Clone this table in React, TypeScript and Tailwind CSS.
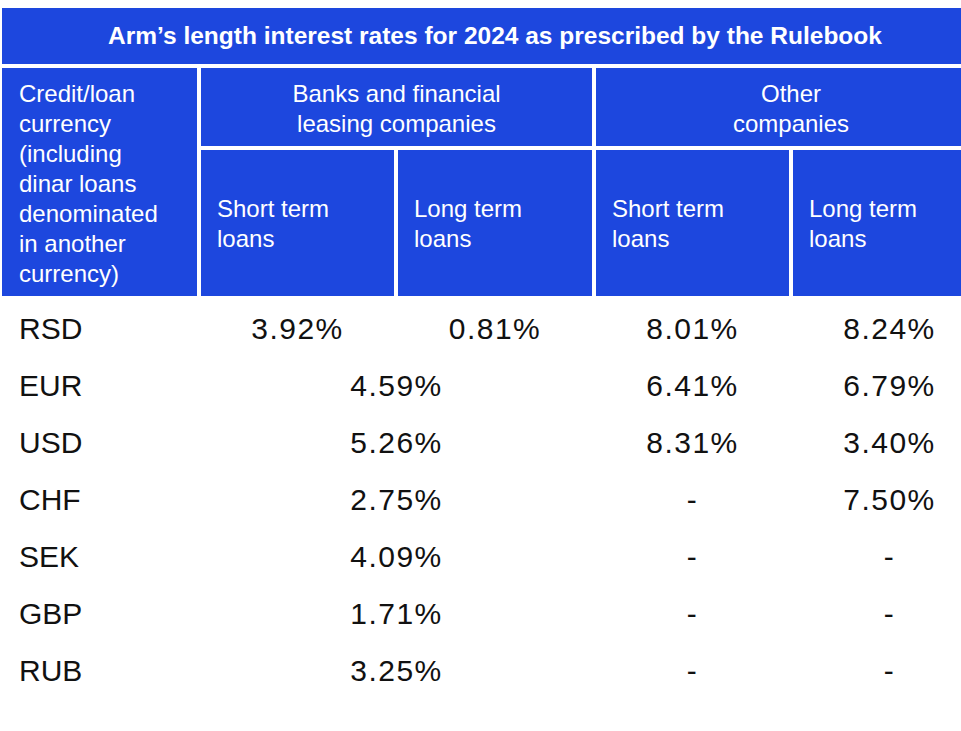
const rows: { code: string; cells: (string | { span: string })[] }[] = [
  { code: "RSD", cells: ["3.92%", "0.81%", "8.01%", "8.24%"] },
  { code: "EUR", cells: [{ span: "4.59%" }, "6.41%", "6.79%"] },
  { code: "USD", cells: [{ span: "5.26%" }, "8.31%", "3.40%"] },
  { code: "CHF", cells: [{ span: "2.75%" }, "-", "7.50%"] },
  { code: "SEK", cells: [{ span: "4.09%" }, "-", "-"] },
  { code: "GBP", cells: [{ span: "1.71%" }, "-", "-"] },
  { code: "RUB", cells: [{ span: "3.25%" }, "-", "-"] },
]

const cols = "grid grid-cols-[195px_193px_194px_193px_193px] gap-x-[4px]"

export default function App() {
  return (
    <div
      className="w-[961px] h-[731px] overflow-hidden bg-white"
      style={{ fontFamily: '"Liberation Sans", Arial, sans-serif' }}
    >
      <div className="w-[986px] ml-[2px] pt-[8px]">
        <div className="h-[56px] bg-[#1d47de] flex items-center justify-center text-white font-bold text-[24.5px]">
          Arm’s length interest rates for 2024 as prescribed by the Rulebook
        </div>

        <div className={`${cols} gap-y-[4px] mt-[4px] grid-rows-[78px_146px] text-white text-[24px] leading-[30px]`}>
          <div className="row-span-2 bg-[#1d47de] pl-[17px] pt-[11px]">
            Credit/loan
            <br />
            currency
            <br />
            (including
            <br />
            dinar loans
            <br />
            denominated
            <br />
            in another
            <br />
            currency)
          </div>
          <div className="col-span-2 bg-[#1d47de] pt-[11px] text-center">
            Banks and financial
            <br />
            leasing companies
          </div>
          <div className="col-span-2 bg-[#1d47de] pt-[11px] text-center">
            Other
            <br />
            companies
          </div>
          {["Short term", "Long term", "Short term", "Long term"].map((t, i) => (
            <div key={i} className="bg-[#1d47de] flex items-center pl-[16px] pt-[2px]">
              <div>
                {t}
                <br />
                loans
              </div>
            </div>
          ))}
        </div>

        <div className="pt-[4px] text-[#111] text-[30px]">
          {rows.map((r) => (
            <div key={r.code} className={`${cols} h-[57px] items-center`}>
              <div className="pl-[17px]">{r.code}</div>
              {r.cells.map((c, i) =>
                typeof c === "string" ? (
                  <div key={i} className="text-center tracking-[1.5px]">
                    {c}
                  </div>
                ) : (
                  <div key={i} className="col-span-2 text-center tracking-[1.5px]">
                    {c.span}
                  </div>
                )
              )}
            </div>
          ))}
        </div>
      </div>
    </div>
  )
}
